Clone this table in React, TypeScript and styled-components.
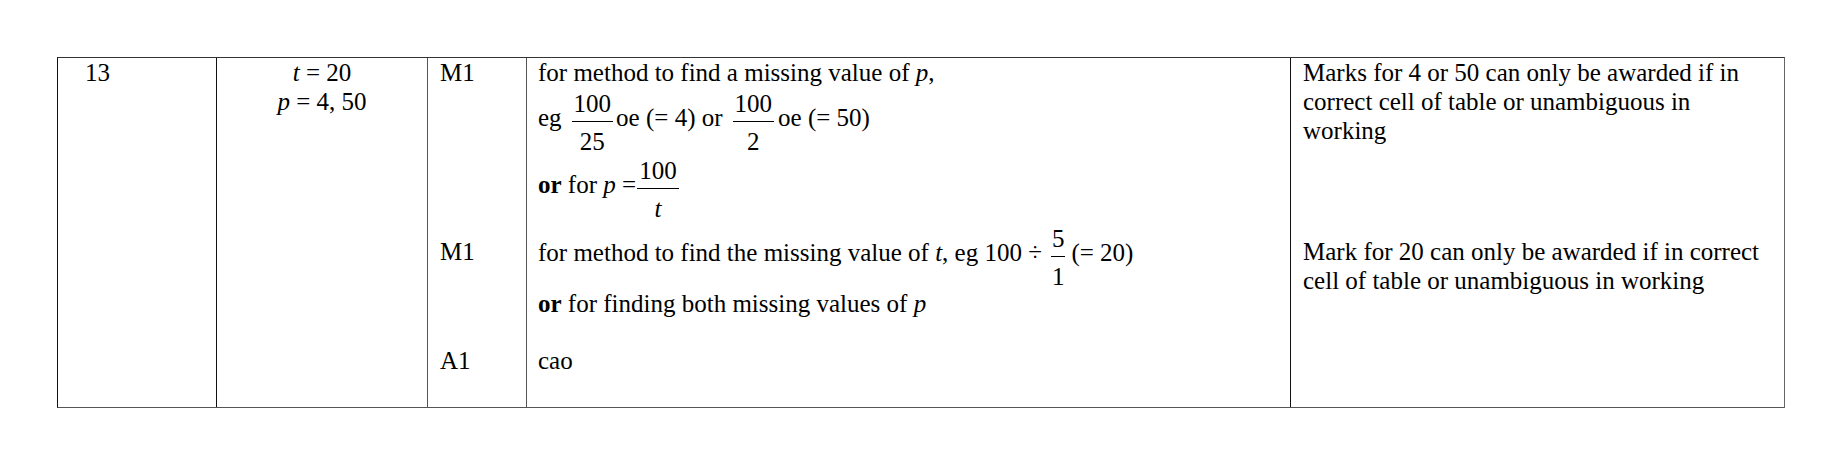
import React from 'react';
import styled, { createGlobalStyle } from 'styled-components';

const GlobalStyle = createGlobalStyle`
  html, body {
    margin: 0;
    padding: 0;
    background: #fff;
  }
  body {
    font-family: "Liberation Serif", "Times New Roman", serif;
    color: #000;
  }
`;

const Page = styled.div`
  width: 1842px;
  height: 465px;
  box-sizing: border-box;
  padding: 57px 0 0 57px;
`;

const Table = styled.div`
  display: grid;
  grid-template-columns: 159px 211px 99px 764px 493px;
  grid-template-rows: 167px 111px 71px;
  width: 1728px;
  box-sizing: border-box;
  border-style: solid;
  border-width: 1px;
  border-color: #333 #666 #555 #111;
  font-size: 25px;
  line-height: 1.15;
`;

const QuestionCell = styled.div`
  grid-column: 1;
  grid-row: 1 / 4;
  border-right: 1px solid #111;
  padding: 1px 0 0 27px;
`;

const AnswerCell = styled.div`
  grid-column: 2;
  grid-row: 1 / 4;
  border-right: 1px solid #555;
  padding-top: 1px;
  text-align: center;
`;

const MarkCell = styled.div<{ $top: number }>`
  grid-column: 3;
  border-right: 1px solid #555;
  padding: ${(p) => p.$top}px 0 0 12px;
`;

const GuidanceCell = styled.div<{ $top: number }>`
  grid-column: 4;
  border-right: 1px solid #111;
  padding: ${(p) => p.$top}px 0 0 11px;
`;

const NoteCell = styled.div<{ $top: number }>`
  grid-column: 5;
  padding: ${(p) => p.$top}px 11px 0 12px;
`;

const Line = styled.div<{ $gap?: number }>`
  margin-top: ${(p) => p.$gap ?? 0}px;
  white-space: nowrap;
`;

const V = styled.i`
  font-style: italic;
`;

const B = styled.b`
  font-weight: bold;
`;

const FracBox = styled.span<{ $ml: number; $mr: number; $pad: number }>`
  display: inline-flex;
  flex-direction: column;
  align-items: stretch;
  text-align: center;
  vertical-align: 14px;
  margin: 0 ${(p) => p.$mr}px 0 ${(p) => p.$ml}px;

  & > span {
    padding-left: ${(p) => p.$pad}px;
    padding-right: ${(p) => p.$pad}px;
    line-height: 1.15;
  }
`;

const Num = styled.span`
  padding-bottom: 2px;
  border-bottom: 1px solid #000;
`;

const Den = styled.span`
  padding-top: 6px;
`;

type FracProps = {
  num: React.ReactNode;
  den: React.ReactNode;
  ml?: number;
  mr?: number;
  pad?: number;
};

const Frac: React.FC<FracProps> = ({ num, den, ml = 0, mr = 0, pad = 2 }) => (
  <FracBox $ml={ml} $mr={mr} $pad={pad}>
    <Num>{num}</Num>
    <Den>{den}</Den>
  </FracBox>
);

const App: React.FC = () => {
  return (
    <>
      <GlobalStyle />
      <Page>
        <Table>
          <QuestionCell>13</QuestionCell>
          <AnswerCell>
            <div>
              <V>t</V> = 20
            </div>
            <div>
              <V>p</V> = 4, 50
            </div>
          </AnswerCell>

          <MarkCell $top={1}>M1</MarkCell>
          <GuidanceCell $top={1}>
            <Line>
              for method to find a missing value of <V>p</V>,
            </Line>
            <Line $gap={2}>
              eg
              <Frac num="100" den="25" ml={10} mr={3} pad={2} />
              oe (= 4) or
              <Frac num="100" den="2" ml={10} mr={4} pad={2} />
              oe (= 50)
            </Line>
            <Line $gap={1}>
              <B>or</B> for <V>p</V> =
              <Frac num="100" den={<V>t</V>} ml={1} pad={2} />
            </Line>
          </GuidanceCell>
          <NoteCell $top={1}>
            Marks for 4 or 50 can only be awarded if in correct cell of table or
            unambiguous in working
          </NoteCell>

          <MarkCell $top={13}>M1</MarkCell>
          <GuidanceCell $top={0}>
            <Line>
              for method to find the missing value of <V>t</V>, eg 100 ÷
              <Frac num="5" den="1" ml={9} mr={6} pad={1} />
              (= 20)
            </Line>
            <Line $gap={-2}>
              <B>or</B> for finding both missing values of <V>p</V>
            </Line>
          </GuidanceCell>
          <NoteCell $top={13}>
            Mark for 20 can only be awarded if in correct cell of table or
            unambiguous in working
          </NoteCell>

          <MarkCell $top={11}>A1</MarkCell>
          <GuidanceCell $top={11}>
            <Line>cao</Line>
          </GuidanceCell>
          <NoteCell $top={11} />
        </Table>
      </Page>
    </>
  );
};

export default App;
